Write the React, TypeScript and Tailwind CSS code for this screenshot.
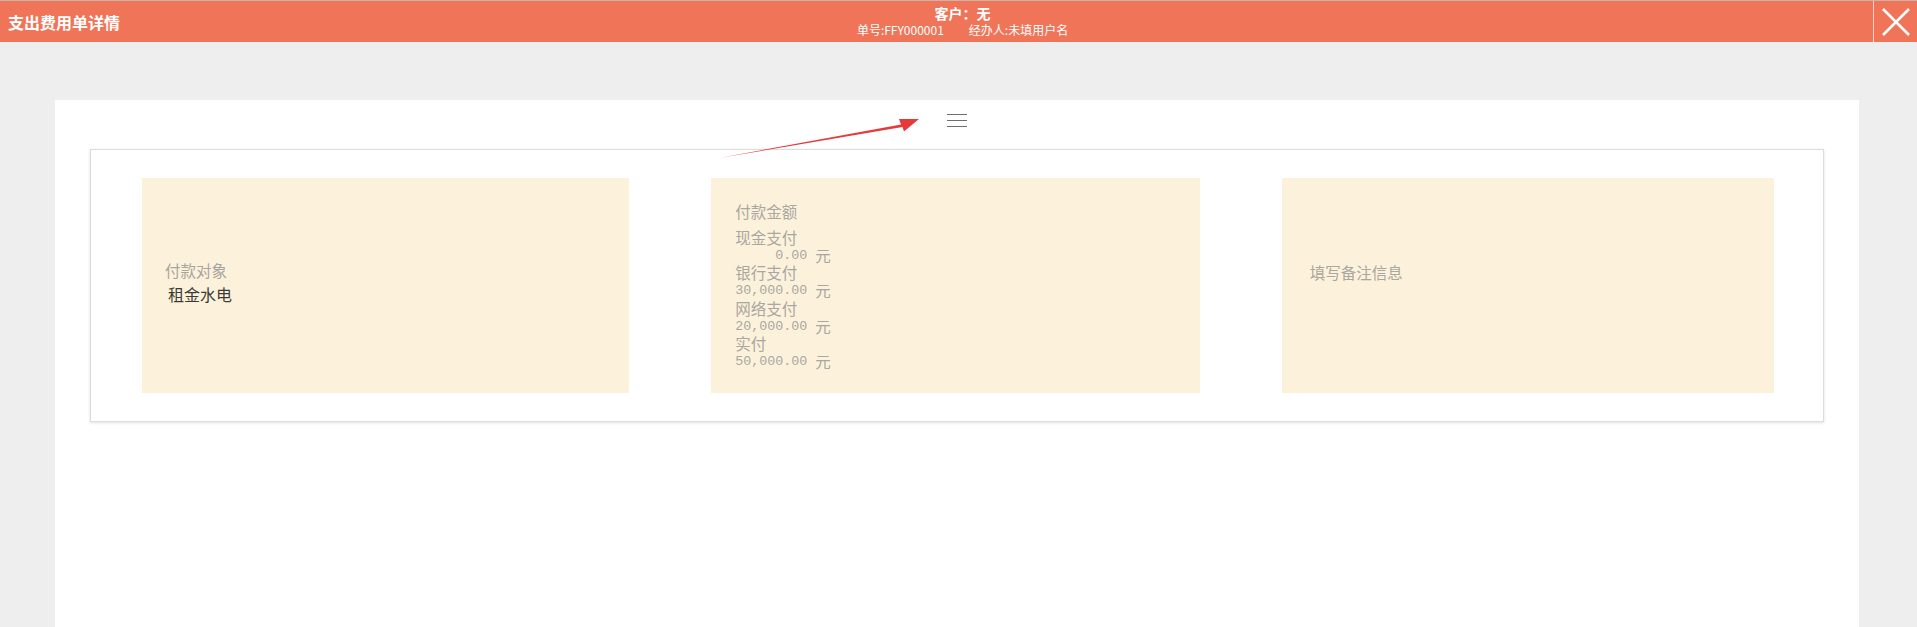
import React from 'react';

const FONT = { fontFamily: '"Noto Sans CJK SC", "Noto Sans", sans-serif' };
const MONO = { fontFamily: '"Liberation Mono", monospace' };

const payments = [
  { label: '现金支付', amount: '     0.00' },
  { label: '银行支付', amount: '30,000.00' },
  { label: '网络支付', amount: '20,000.00' },
  { label: '实付', amount: '50,000.00' },
];

function Header() {
  return (
    <div className="flex h-[42px] shrink-0 border-t border-[#c9b4ae] bg-[#ef7458] text-white">
      {/* title */}
      <div className="flex flex-1 items-center pl-[8px] text-[16px] font-semibold">支出费用单详情</div>

      {/* customer + order meta */}
      <div className="flex flex-col items-center pt-[3px]">
        <div className="text-[14px] font-bold leading-[18px]">客户：无</div>
        <div className="flex gap-[25px] text-[12px] leading-[15px]">
          <span>单号:FFY000001</span>
          <span>经办人:未填用户名</span>
        </div>
      </div>

      <div className="flex flex-1 justify-end">
        <button className="flex h-full w-[44px] items-center justify-center border-l border-white/70">
          <svg width="28" height="28" viewBox="0 0 28 28">
            <path d="M1 1 L27 27 M27 1 L1 27" stroke="#fff" strokeWidth="2.6" fill="none" />
          </svg>
        </button>
      </div>
    </div>
  );
}

function Arrow() {
  return (
    <svg className="pointer-events-none absolute left-0 top-0" width="900" height="80" viewBox="0 0 900 80">
      <polygon points="664,58 846,24.5 844,19 864,19 849,31.5 847.5,27" fill="#e8393a" />
    </svg>
  );
}

export default function App() {
  return (
    <div className="flex h-[627px] w-full flex-col overflow-hidden bg-[#eeeeee]" style={FONT}>
      <Header />

      <div className="relative ml-[55px] mr-[58px] mt-[58px] flex-1 bg-white">
        <Arrow />

        {/* menu toggle */}
        <div className="flex justify-center pt-[14px]">
          <div className="flex w-[20px] flex-col gap-[5px]">
            <div className="h-px bg-[#6f6f6f]" />
            <div className="h-px bg-[#6f6f6f]" />
            <div className="h-px bg-[#6f6f6f]" />
          </div>
        </div>

        <div className="mx-[35px] mt-[22px] flex h-[273px] gap-[82px] border border-[#dcdcdc] py-[28px] pl-[51px] pr-[49px] shadow-[0_1px_3px_rgba(0,0,0,0.12)]">
          {/* payee */}
          <div className="flex flex-1 flex-col justify-center bg-[#fcf2dc] pb-[8px] pl-[23px]">
            <div className="text-[15.5px] leading-[24px] text-[#a8a4a0]">付款对象</div>
            <div className="pl-[3px] text-[16px] leading-[24px] text-[#3d3a36]">租金水电</div>
          </div>

          {/* amounts */}
          <div className="flex-1 bg-[#fcf2dc] pl-[24px] pt-[24px] text-[#aaa6a0]">
            <div className="mb-[9px] text-[15.5px] leading-[18px]">付款金额</div>
            {payments.map((p) => (
              <div key={p.label}>
                <div className="text-[15.5px] leading-[17.7px]">{p.label}</div>
                <div className="flex items-center text-[15.5px] leading-[17.7px]">
                  <span className="whitespace-pre text-[13.33px]" style={MONO}>{p.amount}</span>
                  <span className="ml-[8px]">元</span>
                </div>
              </div>
            ))}
          </div>

          {/* remark */}
          <div className="flex-1 bg-[#fcf2dc] pl-[28px] pt-[85px]">
            <div className="text-[15.5px] leading-[18px] text-[#aaa6a0]">填写备注信息</div>
          </div>
        </div>
      </div>
    </div>
  );
}
